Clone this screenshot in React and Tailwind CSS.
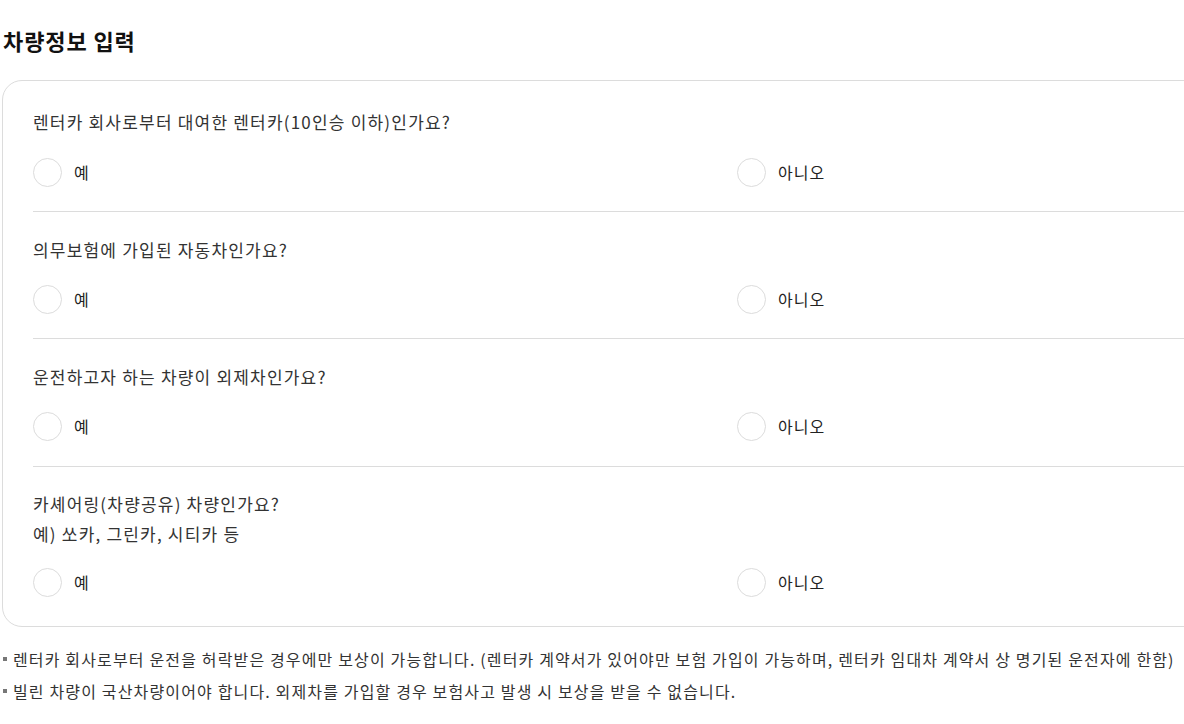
import React, { useState } from 'react';

const questions = [
  { id: 'rental', lines: ['렌터카 회사로부터 대여한 렌터카(10인승 이하)인가요?'] },
  { id: 'insured', lines: ['의무보험에 가입된 자동차인가요?'] },
  { id: 'foreign', lines: ['운전하고자 하는 차량이 외제차인가요?'] },
  { id: 'sharing', lines: ['카셰어링(차량공유) 차량인가요?', '예) 쏘카, 그린카, 시티카 등'] },
];

const notes = [
  '렌터카 회사로부터 운전을 허락받은 경우에만 보상이 가능합니다. (렌터카 계약서가 있어야만 보험 가입이 가능하며, 렌터카 임대차 계약서 상 명기된 운전자에 한함)',
  '빌린 차량이 국산차량이어야 합니다. 외제차를 가입할 경우 보험사고 발생 시 보상을 받을 수 없습니다.',
];

const Radio = ({ label, checked, onClick }) => (
  <button type="button" onClick={onClick} className="flex items-center gap-3 h-[28px]">
    <span className="w-[29px] h-[29px] rounded-full border border-[#dcdcdc] bg-white flex items-center justify-center">
      {checked && <span className="w-[13px] h-[13px] rounded-full bg-[#333]" />}
    </span>
    <span className="text-[16px] tracking-[1px] text-[#222]">{label}</span>
  </button>
);

const App = () => {
  const [answers, setAnswers] = useState({});

  const pick = (id, value) => setAnswers({ ...answers, [id]: value });

  return (
    <div
      className="w-[1184px] h-[724px] overflow-hidden bg-white text-[#333]"
      style={{ fontFamily: '"Noto Sans CJK KR", "Noto Sans", sans-serif' }}
    >
      <h2 className="pl-[3px] pt-[24px] text-[22px] leading-[32px] font-bold text-[#111] tracking-[0.9px]">차량정보 입력</h2>

      <div className="ml-[2px] mt-[24px] w-[1480px] border border-[#dcdcdc] rounded-[20px] pl-[30px]">
        {questions.map((q, i) => {
          const last = i === questions.length - 1;
          let pad = 'border-t border-[#dcdcdc] pt-[23px] pb-[25px]';
          if (i === 0) pad = 'pt-[26px] pb-[25px]';
          if (i === 2) pad = 'border-t border-[#dcdcdc] pt-[23px] pb-[26px]';
          if (last) pad = 'border-t border-[#dcdcdc] pt-[22px] pb-[30px]';
          let row = 'flex mt-[20px]';
          if (i === 0) row = 'flex mt-[21px]';
          if (last) row = 'flex mt-[19px]';
          return (
            <div key={q.id} className={pad}>
              <div className="text-[17px] leading-[30px] tracking-[1.2px] text-[#333]">
                {q.lines.map((line) => (
                  <p key={line}>{line}</p>
                ))}
              </div>
              <div className={row}>
                <div className="w-[704px]">
                  <Radio label="예" checked={answers[q.id] === 'Y'} onClick={() => pick(q.id, 'Y')} />
                </div>
                <Radio label="아니오" checked={answers[q.id] === 'N'} onClick={() => pick(q.id, 'N')} />
              </div>
            </div>
          );
        })}
      </div>

      <ul className="mt-[16px] pl-[3px]">
        {notes.map((note) => (
          <li key={note} className="flex items-center gap-[6px] text-[16px] leading-[32px] tracking-[1.15px] text-[#333] whitespace-nowrap">
            <span className="w-[4px] h-[4px] bg-[#777] shrink-0" />
            {note}
          </li>
        ))}
      </ul>
    </div>
  );
};

export default App;
